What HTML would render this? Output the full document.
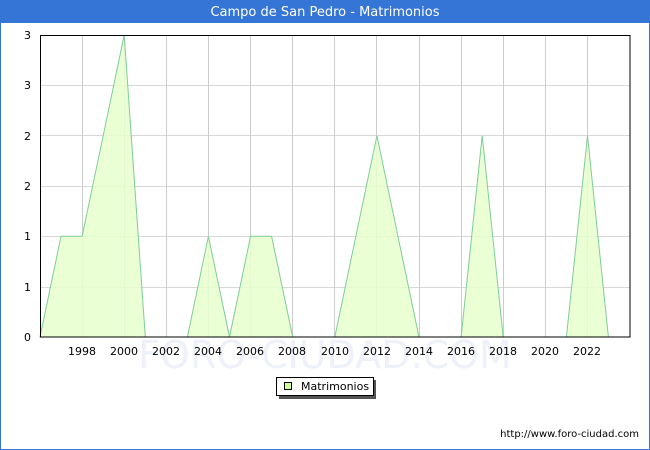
<!DOCTYPE html>
<html><head><meta charset="utf-8"><style>
html,body{margin:0;padding:0;background:#fff}
svg{display:block}
text{font-family:"DejaVu Sans","Liberation Sans",sans-serif}
</style></head><body>
<svg width="650" height="450" viewBox="0 0 650 450" xmlns="http://www.w3.org/2000/svg">
<rect x="0.5" y="0.5" width="649" height="449" fill="#fff" stroke="#3575d6"/>
<rect x="0" y="0" width="650" height="23" fill="#3575d6"/>
<text x="325" y="16" text-anchor="middle" font-size="13" fill="#fff">Campo de San Pedro - Matrimonios</text>
<text x="325" y="368" text-anchor="middle" font-size="38" fill="#eef0fa">FORO-CIUDAD.COM</text>
<g stroke="#d8d8d8" stroke-width="1">
<line x1="40" y1="85.5" x2="630" y2="85.5"/><line x1="40" y1="135.5" x2="630" y2="135.5"/>
<line x1="40" y1="186.5" x2="630" y2="186.5"/><line x1="40" y1="236.5" x2="630" y2="236.5"/>
<line x1="40" y1="287.5" x2="630" y2="287.5"/>
</g>
<g stroke="#cccccc" stroke-width="1">
<line x1="82.5" y1="35" x2="82.5" y2="337"/><line x1="124.5" y1="35" x2="124.5" y2="337"/>
<line x1="166.5" y1="35" x2="166.5" y2="337"/><line x1="208.5" y1="35" x2="208.5" y2="337"/>
<line x1="250.5" y1="35" x2="250.5" y2="337"/><line x1="292.5" y1="35" x2="292.5" y2="337"/>
<line x1="334.5" y1="35" x2="334.5" y2="337"/><line x1="376.5" y1="35" x2="376.5" y2="337"/>
<line x1="419.5" y1="35" x2="419.5" y2="337"/><line x1="461.5" y1="35" x2="461.5" y2="337"/>
<line x1="503.5" y1="35" x2="503.5" y2="337"/><line x1="545.5" y1="35" x2="545.5" y2="337"/>
<line x1="587.5" y1="35" x2="587.5" y2="337"/>
</g>
<polygon fill="#e6ffcc" fill-opacity="0.85" stroke="#7fcc99" stroke-width="1" points="40,337 61,236.3 82.1,236.3 103.2,135.7 124.2,35 145.3,337 187.4,337 208.4,236.3 229.5,337 250.6,236.3 271.6,236.3 292.7,337 334.8,337 376.9,135.7 419,337 461.1,337 482.2,135.7 503.2,337 566.4,337 587.5,135.7 608.4,337"/>
<rect x="40.5" y="35.5" width="589.5" height="301.5" fill="none" stroke="#000" stroke-width="1"/>
<g font-size="11" fill="#000" text-anchor="end">
<text x="31" y="39">3</text><text x="31" y="89">3</text><text x="31" y="140">2</text>
<text x="31" y="190">2</text><text x="31" y="240">1</text><text x="31" y="291">1</text><text x="31" y="341">0</text>
</g>
<g font-size="11" fill="#000" text-anchor="middle">
<text x="82" y="355">1998</text><text x="124" y="355">2000</text><text x="166" y="355">2002</text>
<text x="208" y="355">2004</text><text x="250" y="355">2006</text><text x="292" y="355">2008</text>
<text x="335" y="355">2010</text><text x="377" y="355">2012</text><text x="419" y="355">2014</text>
<text x="461" y="355">2016</text><text x="503" y="355">2018</text><text x="545" y="355">2020</text>
<text x="587" y="355">2022</text>
</g>
<rect x="279" y="380" width="97" height="19" fill="#555"/>
<rect x="276.5" y="377.5" width="97" height="18" fill="#fff" stroke="#000"/>
<rect x="284.5" y="382.5" width="7" height="7" fill="#ccff99" stroke="#000"/>
<text x="301" y="390" font-size="11" fill="#000">Matrimonios</text>
<text x="639" y="437" text-anchor="end" font-size="10" fill="#000">http://www.foro-ciudad.com</text>
</svg>
</body></html>
